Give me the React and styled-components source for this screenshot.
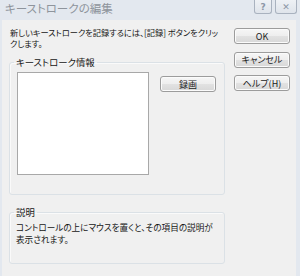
import React from 'react';
import styled, { createGlobalStyle } from 'styled-components';

const GlobalStyle = createGlobalStyle`
  html, body { margin: 0; padding: 0; background: #f0f0f0; }
  body { font-family: "Noto Sans CJK JP", "Noto Sans", sans-serif; }
`;

const Window = styled.div`
  width: 300px;
  height: 276px;
  box-sizing: border-box;
  display: flex;
  flex-direction: column;
  background: #e3e8ef;
  padding: 0 4px 0 2px;
`;

const TitleBar = styled.div`
  height: 20px;
  flex: none;
  display: flex;
  align-items: flex-start;
  justify-content: space-between;
`;

const Title = styled.div`
  padding: 2px 0 0 3px;
  font-size: 11.5px;
  line-height: 12px;
  color: #8e949c;
  font-feature-settings: "palt";
`;

const Caption = styled.div`
  display: flex;
  gap: 3px;
  margin-right: -1px;
`;

const CaptionButton = styled.div`
  width: ${({ $w }) => $w}px;
  height: 14px;
  box-sizing: border-box;
  border: 1px solid #a9b2bf;
  border-top: none;
  border-radius: 0 0 3px 3px;
  background: linear-gradient(#eef1f5, #dfe4eb);
  display: flex;
  align-items: center;
  justify-content: center;
  color: #8b96a6;
  font-family: "DejaVu Sans", sans-serif;
  font-size: 9px;
  font-weight: bold;
`;

const Body = styled.div`
  flex: 1;
  background: #f0f0f0;
  display: flex;
  gap: 9px;
  padding: 7px 0 0 7px;
`;

const LeftColumn = styled.div`
  width: 216px;
  display: flex;
  flex-direction: column;
`;

const Text = styled.p`
  margin: 0;
  font-size: 8.6px;
  line-height: 12px;
  color: #161616;
  font-feature-settings: "palt";
  white-space: nowrap;
`;

const Intro = styled(Text)`
  margin: 0 0 8px 1px;
  font-size: 8.2px;
  line-height: 11px;
`;

const Group = styled.fieldset`
  margin: ${({ $top }) => $top}px 0 0 0;
  height: ${({ $h }) => $h}px;
  box-sizing: border-box;
  border: 1px solid #dbe1e6;
  border-radius: 3px;
  box-shadow: inset 1px 1px 0 #fafafa;
  padding: ${({ $pad }) => $pad};
  min-width: 0;
`;

const Legend = styled.legend`
  margin-left: ${({ $left }) => $left}px;
  padding: 0 2px;
  font-size: 9.4px;
  line-height: 10px;
  color: #161616;
  font-feature-settings: "palt";
`;

const GroupRow = styled.div`
  display: flex;
  gap: 11px;
  align-items: flex-start;
`;

const ListBox = styled.div`
  width: 132px;
  height: 103px;
  box-sizing: border-box;
  background: #fff;
  border: 1px solid #a8a8a8;
`;

const Button = styled.div`
  width: 56px;
  height: 16px;
  box-sizing: border-box;
  margin-top: ${({ $top }) => $top || 0}px;
  border: 1px solid #9c9c9c;
  border-radius: 3px;
  background: linear-gradient(#f6f6f6 0%, #eeeeee 50%, #e2e2e2 51%, #d8d8d8 100%);
  box-shadow: inset 0 0 0 1px #fbfbfb;
  display: flex;
  align-items: center;
  justify-content: center;
  font-size: 9px;
  color: #1b1b1b;
  font-feature-settings: "palt";
`;

const RightColumn = styled.div`
  display: flex;
  flex-direction: column;
  gap: 7.5px;
  padding-top: 1px;
`;

export default function App() {
  return (
    <>
      <GlobalStyle />
      <Window>
        <TitleBar>
          <Title>キーストロークの編集</Title>
          <Caption>
            <CaptionButton $w={18}>?</CaptionButton>
            <CaptionButton $w={22}>✕</CaptionButton>
          </Caption>
        </TitleBar>
        <Body>
          <LeftColumn>
            <Intro>
              新しいキーストロークを記録するには、[記録] ボタンをクリッ
              <br />
              クします。
            </Intro>
            <Group $top={0} $h={138} $pad="5px 7px 0 7px">
              <Legend $left={-3}>キーストローク情報</Legend>
              <GroupRow>
                <ListBox />
                <Button $top={4}>録画</Button>
              </GroupRow>
            </Group>
            <Group $top={12} $h={57} $pad="4px 6px 0 6px">
              <Legend $left={-2}>説明</Legend>
              <Text>
                コントロールの上にマウスを置くと、その項目の説明が
                <br />
                表示されます。
              </Text>
            </Group>
          </LeftColumn>
          <RightColumn>
            <Button>OK</Button>
            <Button>キャンセル</Button>
            <Button>ヘルプ(H)</Button>
          </RightColumn>
        </Body>
      </Window>
    </>
  );
}
